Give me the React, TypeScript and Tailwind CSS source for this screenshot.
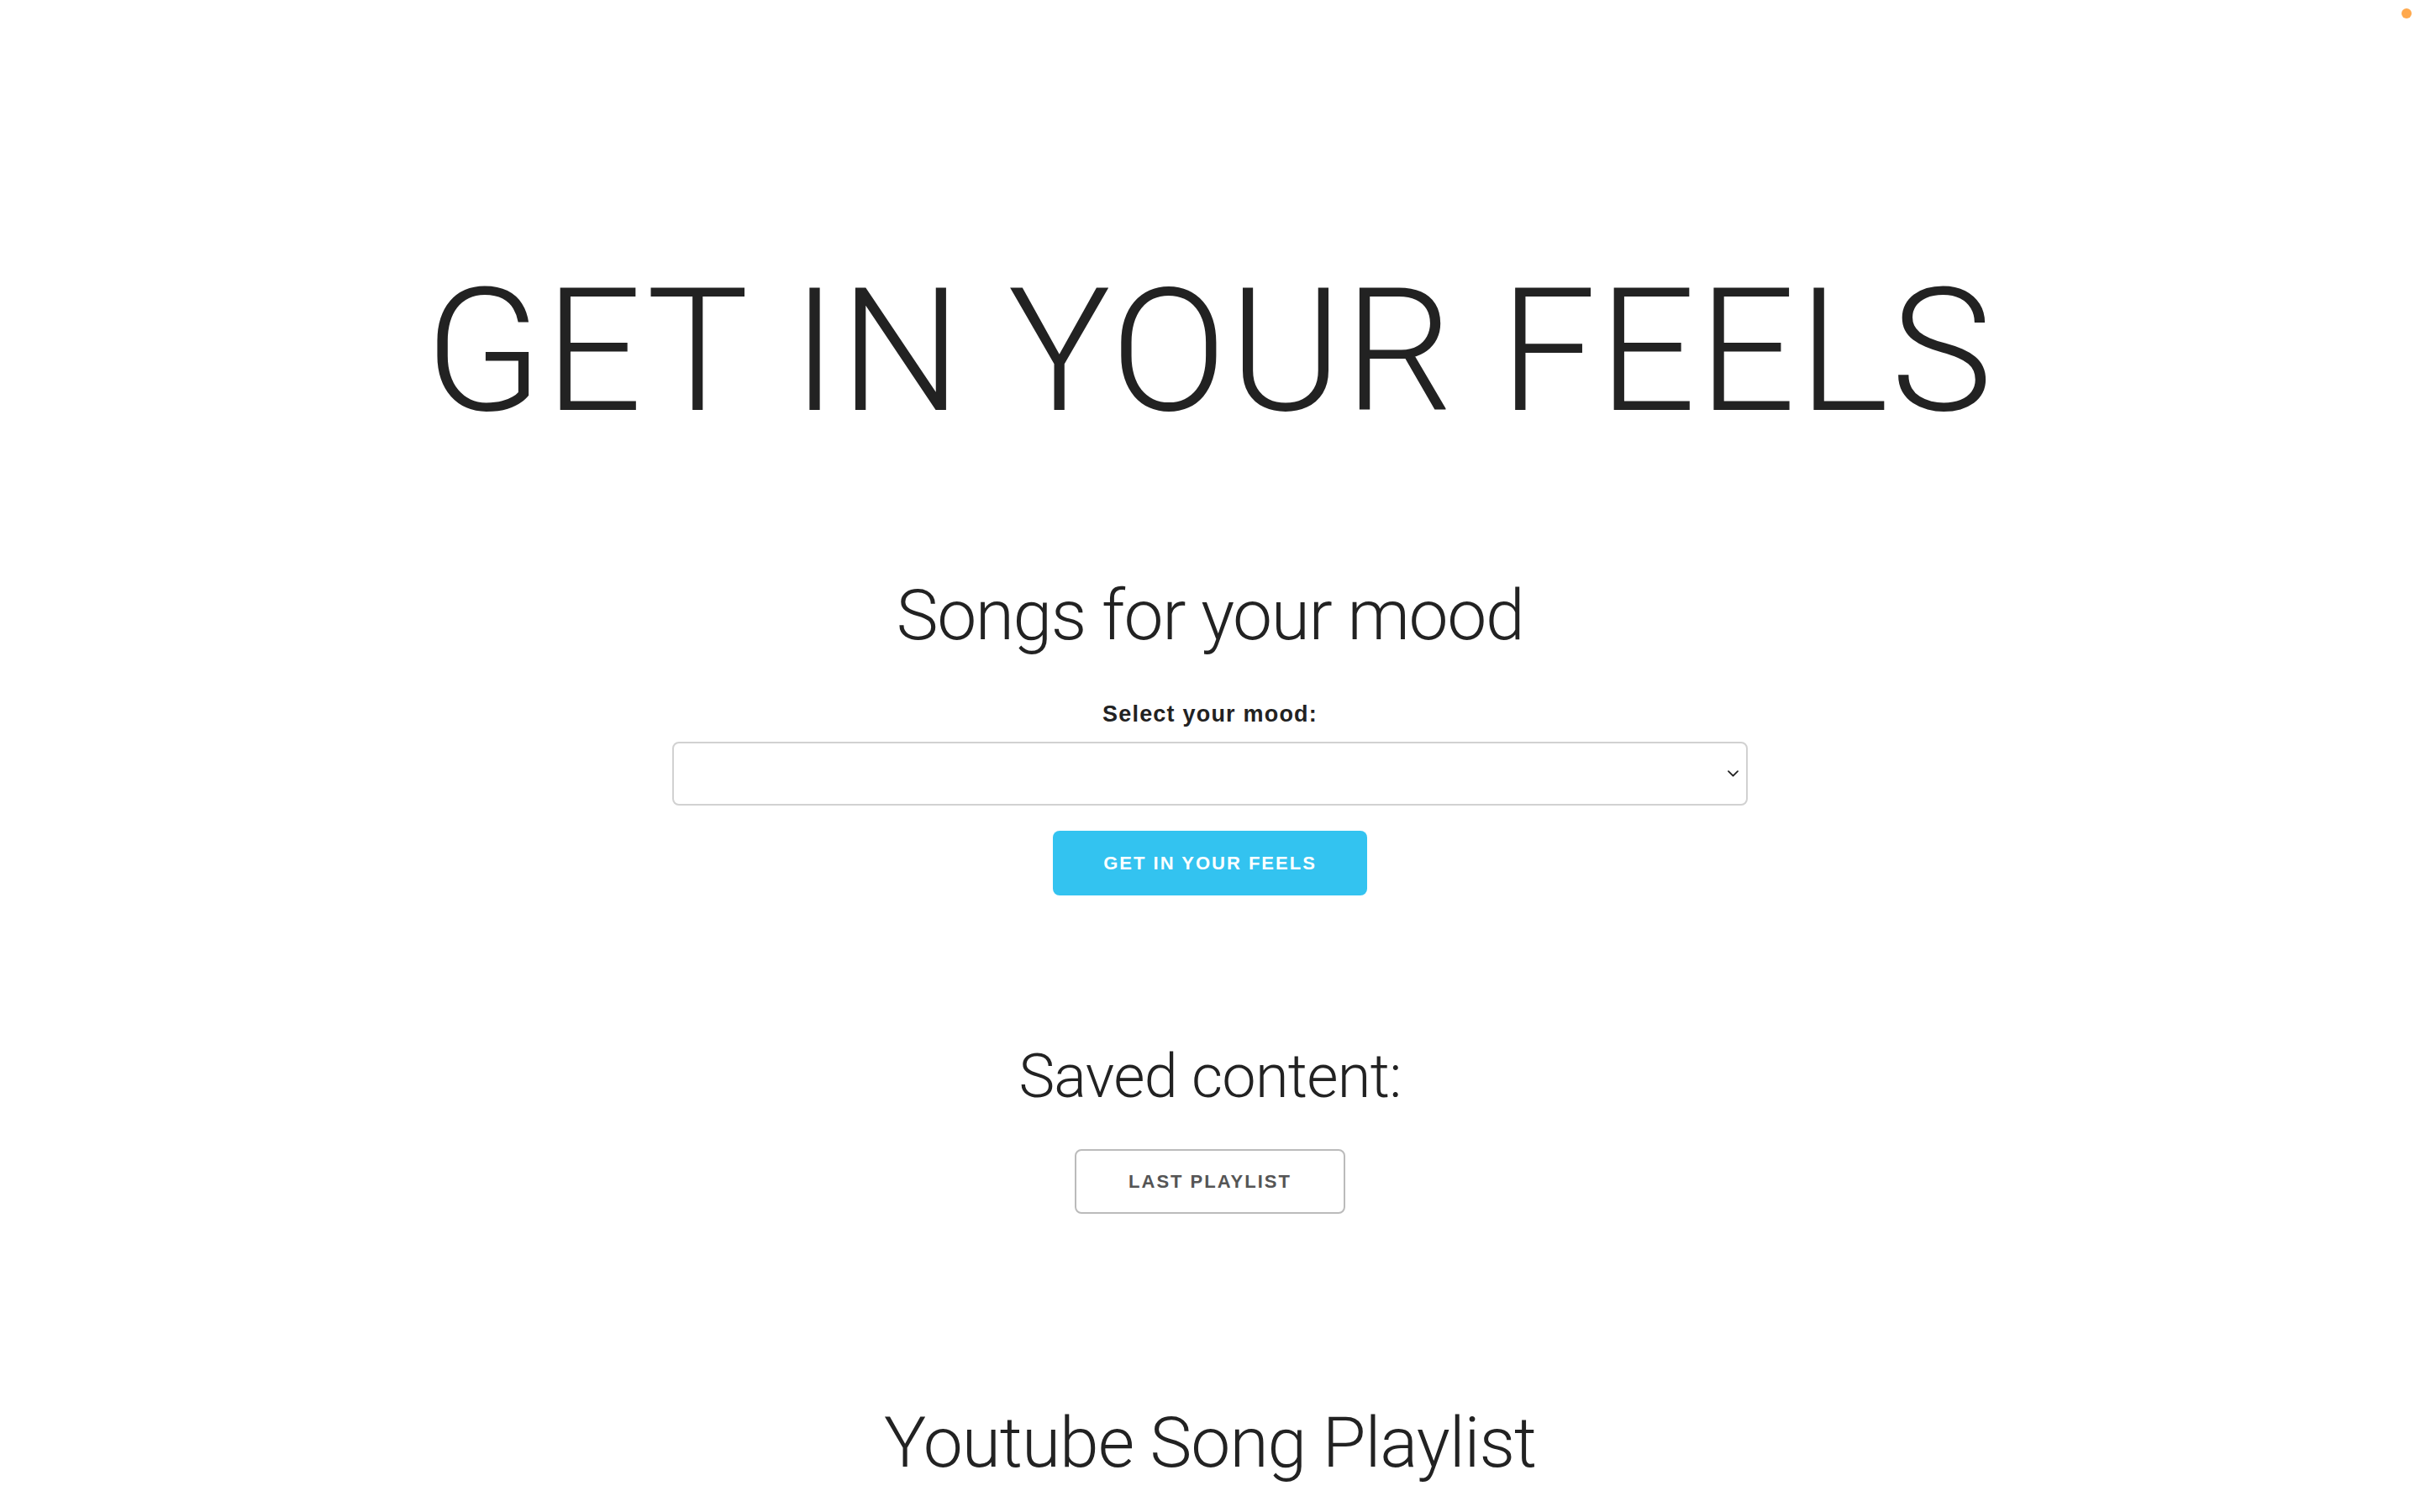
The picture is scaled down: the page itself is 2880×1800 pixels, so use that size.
import React, { useState } from 'react';

const moods = ['', 'Happy', 'Sad', 'Angry', 'Chill', 'Romantic'];

const App: React.FC = () => {
  const [mood, setMood] = useState('');

  return (
    <div className="relative min-h-screen bg-white text-[#222] font-['Liberation_Sans',Arial,sans-serif]">
      {/* recording dot */}
      <span className="absolute top-[10px] right-[10px] w-[12px] h-[12px] rounded-full bg-[#ffa94d]" />

      <div className="flex flex-col items-center text-center pt-[297px]">
        <h1 className="font-['Roboto',sans-serif] font-light text-[204px] leading-[1.2] tracking-[2.8px] whitespace-nowrap">
          GET IN YOUR FEELS
        </h1>

        {/* Mood picker */}
        <h2 className="mt-[138px] font-['Roboto',sans-serif] font-light text-[84px] leading-[1.25] tracking-[-1.4px]">
          Songs for your mood
        </h2>
        <label htmlFor="mood" className="mt-[44px] block text-[27px] leading-[1.6] font-bold tracking-[1.2px]">
          Select your mood:
        </label>
        <div className="relative mt-[11px] w-[1280px]">
          <select
            id="mood"
            value={mood}
            onChange={(e) => setMood(e.target.value)}
            className="block w-full h-[76px] px-[20px] appearance-none bg-white border-2 border-[#d1d1d1] rounded-[8px] text-[30px] text-[#222] outline-none"
          >
            {moods.map((m) => (
              <option key={m} value={m}>
                {m}
              </option>
            ))}
          </select>
          <svg
            className="absolute right-[11px] top-1/2 -translate-y-1/2 w-[13px] h-[8px] pointer-events-none"
            viewBox="0 0 13 8"
            fill="none"
            stroke="#222"
            strokeWidth="1.8"
            strokeLinecap="round"
            strokeLinejoin="round"
          >
            <path d="M1 1.2l5.5 5.5 5.5-5.5" />
          </svg>
        </div>
        <button className="mt-[30px] h-[77px] px-[60px] rounded-[8px] bg-[#33c3f0] text-white text-[22px] font-bold uppercase tracking-[2px]">
          Get in your feels
        </button>

        {/* Saved */}
        <h3 className="mt-[169px] font-['Roboto',sans-serif] font-light text-[72px] leading-[1.3] tracking-[-0.7px]">
          Saved content:
        </h3>
        <button className="mt-[39px] h-[77px] px-[62px] rounded-[8px] border-2 border-[#bbb] bg-transparent text-[#555] text-[22px] font-bold uppercase tracking-[2px]">
          Last playlist
        </button>

        {/* Playlist */}
        <h2 className="mt-[220px] font-['Roboto',sans-serif] font-light text-[84px] leading-[1.25] tracking-[-1px]">
          Youtube Song Playlist
        </h2>
      </div>
    </div>
  );
};

export default App;
